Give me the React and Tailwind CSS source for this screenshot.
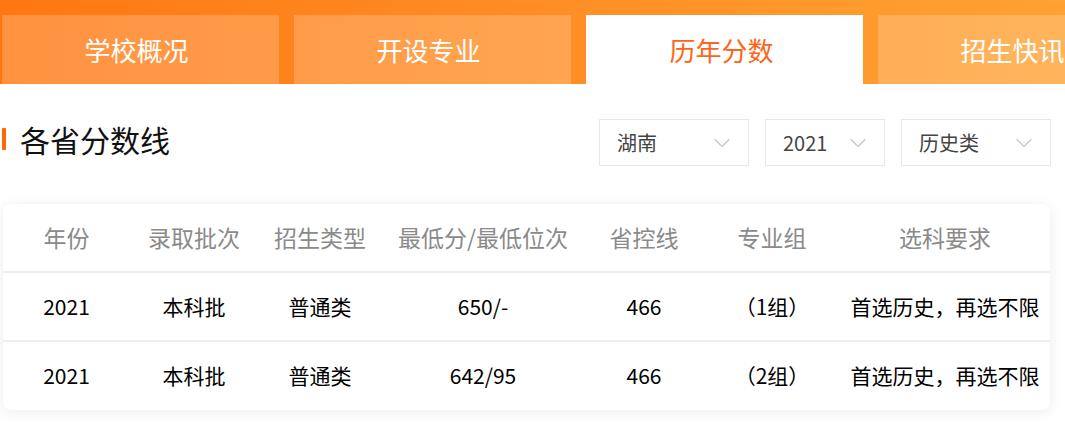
import { ChevronDown } from 'lucide-react';

const tabs = ['学校概况', '开设专业', '历年分数', '招生快讯'];

const filters = [
    { label: '湖南', width: 'w-[150px]' },
    { label: '2021', width: 'w-[120px]' },
    { label: '历史类', width: 'w-[150px]' },
];

const columns = ['年份', '录取批次', '招生类型', '最低分/最低位次', '省控线', '专业组', '选科要求'];

const rows = [
    ['2021', '本科批', '普通类', '650/-', '466', '（1组）', '首选历史，再选不限'],
    ['2021', '本科批', '普通类', '642/95', '466', '（2组）', '首选历史，再选不限'],
];

const gridCols = 'grid grid-cols-[127px_128px_124px_202px_120px_136px_1fr]';

const App = () => {
    return (
        <div className="w-[1065px] h-[426px] overflow-hidden bg-white" style={{ fontFamily: '"Microsoft YaHei", "Noto Sans CJK SC", "Noto Sans", sans-serif' }}>
            {/* Tab bar */}
            <nav className="flex gap-[15px] pt-[15px] pl-[2px] bg-gradient-to-r from-[#ff7710] to-[#ffa232] overflow-hidden">
                {tabs.map((tab, i) => (
                    <div
                        key={tab}
                        className={
                            i === 2
                                ? 'w-[277px] h-[69px] shrink-0 flex items-center justify-center pr-[6px] bg-white text-[#ff6418] text-[26px]'
                                : 'w-[277px] h-[69px] shrink-0 flex items-center justify-center pr-[8px] bg-white/20 text-white text-[26px] whitespace-nowrap'
                        }
                    >
                        {tab}
                    </div>
                ))}
            </nav>

            {/* Section header */}
            <div className="flex items-center justify-between mt-[35px] pl-[2px] pr-[14px]">
                <div className="flex items-center gap-[14px] mb-[8px]">
                    <span className="w-[4px] h-[22px] bg-[#ff6a00] rounded-[1px]"></span>
                    <h2 className="text-[30px] text-[#111] leading-none">各省分数线</h2>
                </div>
                <div className="flex gap-[16px]">
                    {filters.map((f) => (
                        <div key={f.label} className={`${f.width} h-[47px] border border-[#e8e8e8] flex items-center justify-between pl-[17px] pr-[12px] text-[20px] text-[#444]`}>
                            <span>{f.label}</span>
                            <ChevronDown className="w-[28px] h-[28px] text-[#c4c4c4]" strokeWidth={1} />
                        </div>
                    ))}
                </div>
            </div>

            {/* Score table */}
            <div className="ml-[3px] mt-[38px] w-[1047px] bg-white rounded-lg shadow-[0_2px_14px_rgba(0,0,0,0.08)]">
                <div className={`${gridCols} h-[69px] items-center text-center text-[23px] text-[#8a8a8a] border-b-2 border-[#eee]`}>
                    {columns.map((c) => (
                        <div key={c} className="whitespace-nowrap">{c}</div>
                    ))}
                </div>
                {rows.map((row, r) => (
                    <div
                        key={r}
                        className={
                            r === rows.length - 1
                                ? `${gridCols} h-[68px] items-center text-center text-[21px] text-[#000]`
                                : `${gridCols} h-[69px] items-center text-center text-[21px] text-[#000] border-b-2 border-[#eee]`
                        }
                    >
                        {row.map((cell, c) => (
                            <div key={c} className="whitespace-nowrap">{cell}</div>
                        ))}
                    </div>
                ))}
            </div>
        </div>
    );
};

export default App;
